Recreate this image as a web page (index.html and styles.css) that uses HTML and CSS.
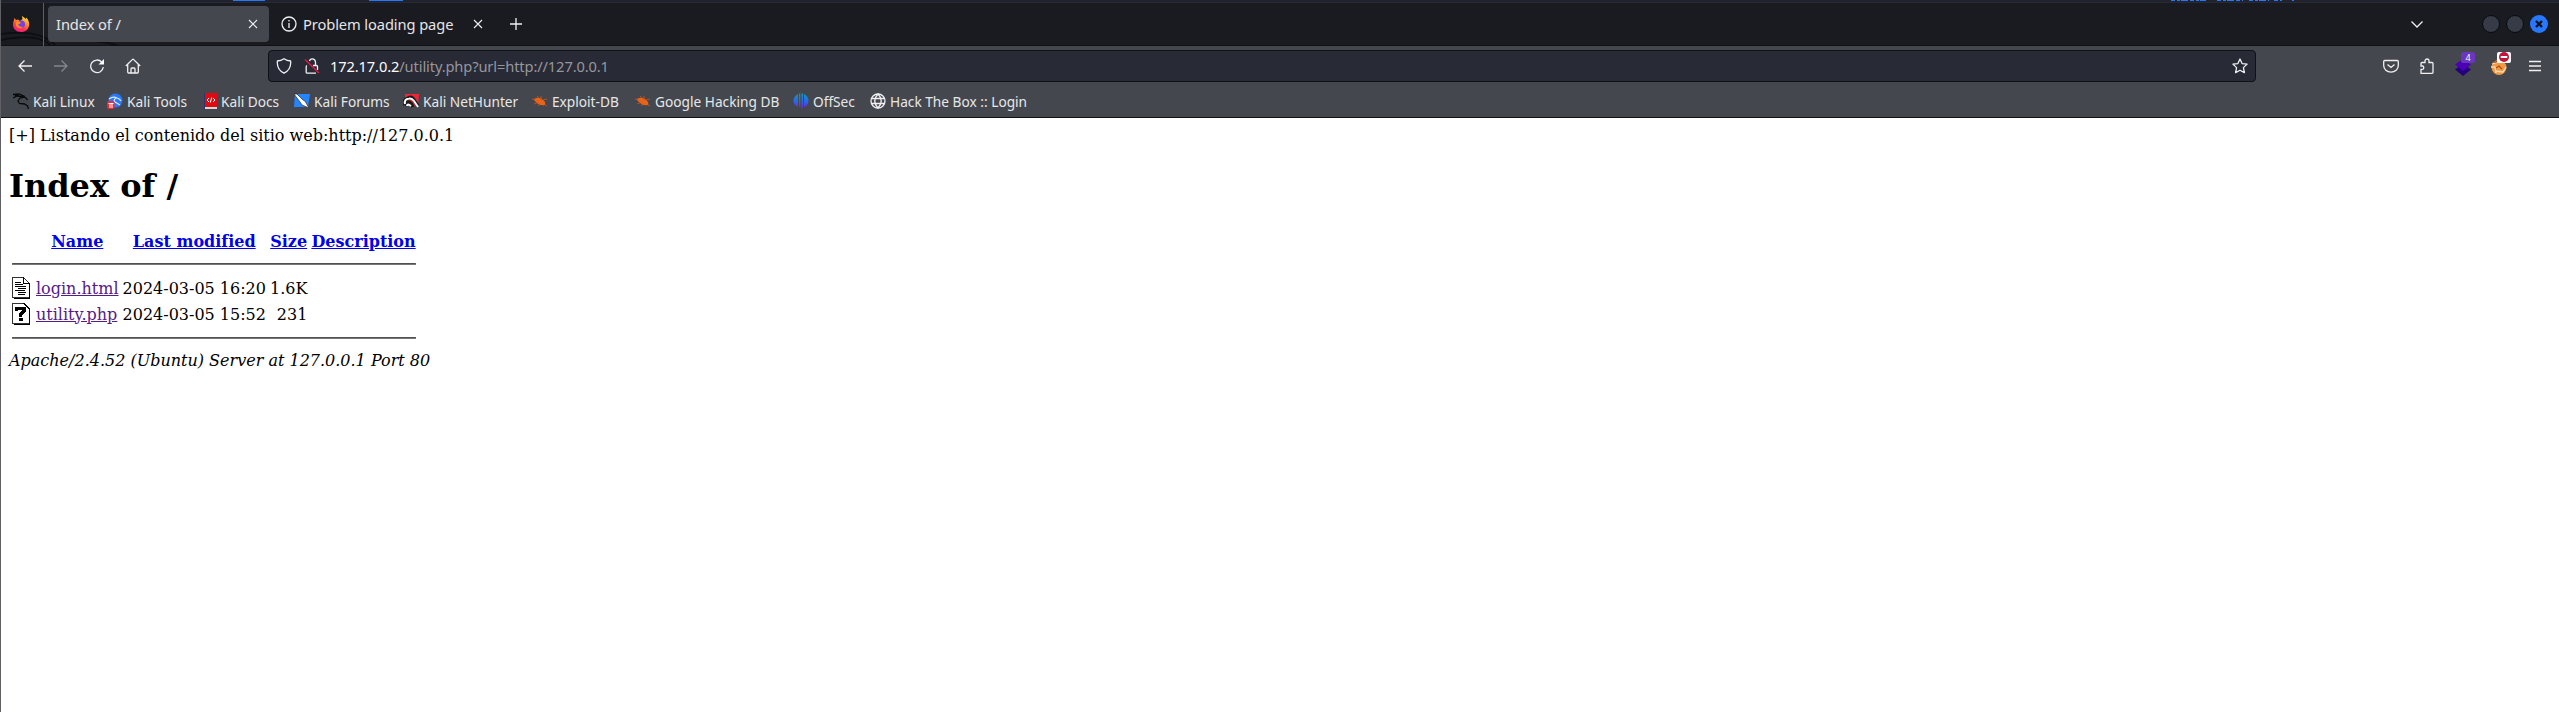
FILE: index.html
```html
<!DOCTYPE html>
<html lang="es">
<head>
<meta charset="utf-8">
<title>Index of /</title>
<link rel="stylesheet" href="styles.css">
</head>
<body>
<div class="window">
  <div class="desk"><svg width="2558" height="1" shape-rendering="crispEdges"><path d="M232 .5h32M368 .5h34" stroke="#2777ff"/><path d="M2170 .5h35M2216 .5h26M2248 .5h20M2273 .5h8M2291 .5h2" stroke="#2777ff" stroke-dasharray="4 2 3 1 7 2"/></svg></div>
  <div class="tabs">
    <svg class="dragon" width="200" height="43" viewBox="0 0 200 43"><path d="M0 31C22 28 43 29 55 43M0 37C25 32 42 34 50 43M94 38Q107 39 118 43" fill="none" stroke="#0e0f12" stroke-width="2"/></svg>
    <div class="fox">
      <svg width="18" height="18" viewBox="0 0 18 18"><defs><linearGradient id="fx" x1=".8" y1="0" x2=".3" y2="1"><stop offset="0" stop-color="#fff044"/><stop offset=".4" stop-color="#ff8a22"/><stop offset=".7" stop-color="#ff3b4c"/><stop offset="1" stop-color="#f21a88"/></linearGradient></defs><path d="M2.500 3 4 5 6 4.500 8 6 10.500 4 10 1l4 3 .5-1.500C17 6 18 9 16.500 12.500 15 16 12 17 9 17 4 17 1 13.500 1 9.500 1 7 2 5.500 2.500 3z" fill="url(#fx)"/><circle cx="9.300" cy="9.300" r="3.700" fill="#7542e5"/><path d="M4 7Q7 5 9 8L6 9.500Q7 12 11 12 7 15 4 11z" fill="#ff8c22"/></svg>
    </div>
    <div class="tab active"><span>Index of /</span><svg class="x" width="10" height="10" viewBox="0 0 10 10"><path d="M1 1l8 8M9 1l-8 8"/></svg></div>
    <div class="tab second"><svg width="16" height="16" viewBox="0 0 16 16"><circle cx="8" cy="8" r="7"/><path d="M8 7v5M8 4v1.500"/></svg><span>Problem loading page</span><svg class="x" width="10" height="10" viewBox="0 0 10 10"><path d="M1 1l8 8M9 1l-8 8"/></svg></div>
    <svg class="plus" width="12" height="12" viewBox="0 0 12 12"><path d="M6 0v12M0 6h12"/></svg>
    <svg class="chev" width="14" height="9" viewBox="0 0 14 9"><path d="M1.500 1.500 7 7l5.500-5.500"/></svg>
    <div class="controls"><i></i><i></i><b><svg width="10" height="10" viewBox="0 0 10 10"><path d="M2 2l6 6M8 2l-6 6"/></svg></b></div>
  </div>
  <div class="nav">
    <svg class="back" width="16" height="16" viewBox="0 0 16 16"><path d="M15 8H2M7.500 2.500 2 8l5.500 5.500"/></svg>
    <svg class="fwd" width="16" height="16" viewBox="0 0 16 16"><path d="M1 8h13M8.500 2.500 14 8l-5.500 5.500"/></svg>
    <svg class="reload" width="16" height="16" viewBox="0 0 16 16"><path d="M12.800 4.200A6.300 6.300 0 1 0 14.300 9"/><path d="M9.500 6.500h5.500V1z" fill="#fbfbfe" stroke="none"/></svg>
    <svg class="home" width="16" height="16" viewBox="0 0 16 16"><path d="M.8 8 7.300 1.600q.7-.7 1.400 0L15.200 8M2.700 6.500V14q0 1 1 1h8.600q1 0 1-1V6.500M6 15v-4q0-1 1-1h2q1 0 1 1v4"/></svg>
    <div class="url">
      <svg width="16" height="16" viewBox="0 0 16 16"><path d="M8 .8Q11 2.800 14.600 3 15.500 11.500 8 15.200.5 11.500 1.400 3 5 2.800 8 .8z"/></svg>
      <svg class="lock" width="16" height="16" viewBox="0 0 16 16"><path d="M5.500 3Q6 .8 8.200.8q3 0 3.300 3.200v3M3 7.500q-.8.300-.8 1.200v5.500q0 1 1 1H12M9 7.500h3.500q1 0 1 1V12"/><path d="M1 1.500 15 15" stroke="#e61745" stroke-width="1.400"/></svg>
      <span><em>172.17.0.2</em>/utility.php?url=http://127.0.0.1</span>
      <svg class="star" width="16" height="16" viewBox="0 0 16 16"><path d="m8 1 2.100 4.600 5 .5-3.700 3.500 1 5L8 12.200l-4.400 2.400 1-5L.9 6.100l5-.5z" stroke-linejoin="round"/></svg>
    </div>
    <div class="tools">
      <svg width="16" height="16" viewBox="0 0 16 16"><path d="M1.700 2.500h12.600q1 0 1 1V7.500a7.300 6.700 0 0 1-14.600 0V3.500q0-1 1-1zM4.500 6.500 8 9.500l3.500-3"/></svg>
      <svg width="16" height="16" viewBox="0 0 16 16"><path d="M2 8V5.500q0-1 1-1h3V3a2 2 0 0 1 4 0v1.500h3q1 0 1 1v9q0 .8-1 .8H2v-4h1.500a1.700 1.700 0 0 0 0-3.300z"/></svg>
      <div class="ext"><svg width="18" height="20" viewBox="0 0 18 20"><path d="m9 8 8 5.500L9 20l-8-6.500z" fill="#24007c" stroke="none"/><path d="m9 3 8 5.500L9 15 1 8.500z" fill="#4b00b5" stroke="none"/></svg><span class="badge">4</span></div>
      <div class="ext"><svg width="18" height="20" viewBox="0 0 18 20"><circle cx="9" cy="11.500" r="7.500" fill="#f19a43" stroke="none"/><path d="M1 11h4l1 6M5 15l8 1 3-5M2 8l7-2" stroke="#f2d9b8" fill="none"/><path d="M4 6q2 1 3-1M6 12l3-2 3 3" stroke="#b64d12"/></svg><span class="block"><svg width="10" height="10" viewBox="0 0 10 10"><circle cx="5" cy="5" r="5" fill="#c4143c" stroke="none"/><path d="M1.700 5h6.600" stroke="#fff" stroke-width="2"/></svg></span></div>
      <svg class="menu" width="16" height="16" viewBox="0 0 16 16"><path d="M2 3.500h12M2 8h12M2 12.500h12"/></svg>
    </div>
  </div>
  <div class="marks">
    <a class="linux"><svg width="16" height="16" viewBox="0 0 16 16"><path d="M0 1.500 6 1l6 2.500M0 5l4-2 5 .5 4 1.500 1.500 2M11 4l-4 1-2 3 1.500 2.500 5 .5 3 2 1 3M2 3l4-1" stroke="#090a0c" stroke-width="1.300"/></svg><span>Kali Linux</span></a>
    <a class="ktools"><svg width="16" height="16" viewBox="0 0 16 16"><circle cx="8.500" cy="7.500" r="7" fill="#2777ff" stroke="none"/><path d="M2 6q4-3 8-1 3 1 4 3M9 5Q6 7 8 9l5 3" stroke="#d7e8ff"/><rect y="8" width="7.500" height="8" rx="2" fill="#eb2b38" stroke="none"/><path d="M1.500 10.500h5M3 11v4M5 11v4" stroke="#fff" stroke-width="1"/></svg><span>Kali Tools</span></a>
    <a class="docs"><svg width="13" height="16" viewBox="0 0 13 16"><path d="M0 0h3v16H0z" fill="#26396c" stroke="none"/><path d="M1 0h12v14H1z" fill="#e20a12" stroke="none"/><path d="M1 14h12v2H1z" fill="#d8d8d8" stroke="none"/><path d="M5 5 3 7l2 2M9 5l2 2-2 2M7.700 4.500l-1.400 5" stroke="#fff" stroke-width="1"/></svg><span>Kali Docs</span></a>
    <a class="forums"><svg width="16" height="16" viewBox="0 0 16 16"><path d="M1 1h15l-2 13H0z" fill="#2584ff" stroke="none"/><path d="M0 1h3l6 6 2 1 4 7-7-3-2-3z" fill="#fff" stroke="#24292f" stroke-width=".7"/></svg><span>Kali Forums</span></a>
    <a class="hunter"><svg width="16" height="16" viewBox="0 0 16 16"><path d="M2 1h14l-1 12H2z" fill="#ef2638" stroke="none"/><path d="M2 12Q0 7 5 5q4-2 6 2l4 6M4 13q-1-4 2-4 2 0 4 5" stroke="#1a1a1a" stroke-width="3.500"/><path d="M2 11Q1 6 6 5.500 9 5 11 8l4 6M4 13q0-3 4 0" stroke="#fff" stroke-width="2"/></svg><span>Kali NetHunter</span></a>
    <a class="exploit"><svg width="16" height="16" viewBox="0 0 16 16"><path d="M2 6Q7 3 11 7q3 2 2 5-5 1-8-2-3-2-3-4z" fill="#ec6316" stroke="none"/><path d="M0 6l5 1M5 3l4 4M9 3v5M11 7l4-1M2 11l5-2M6 13l3-3M12 11l3 2" stroke="#d85c1c" stroke-width=".7"/></svg><span>Exploit-DB</span></a>
    <a class="google"><svg width="16" height="16" viewBox="0 0 16 16"><path d="M2 6Q7 3 11 7q3 2 2 5-5 1-8-2-3-2-3-4z" fill="#ec6316" stroke="none"/><path d="M0 6l5 1M5 3l4 4M9 3v5M11 7l4-1M2 11l5-2M6 13l3-3M12 11l3 2" stroke="#d85c1c" stroke-width=".7"/></svg><span>Google Hacking DB</span></a>
    <a class="offsec"><svg width="16" height="16" viewBox="0 0 16 16"><defs><linearGradient id="os" x2="0" y2="1"><stop stop-color="#1796b4"/><stop offset=".5" stop-color="#2868e8"/><stop offset="1" stop-color="#7620d0"/></linearGradient></defs><path d="M5 1v13Q0 12 .5 7 1 3 5 1zM6 .5h1.300v13.800L6 14zM8.500 .5H10V14l-1 2h-.5zM11 1q4 2 4.500 6 .5 5-4.500 7z" fill="url(#os)" stroke="none"/></svg><span>OffSec</span></a>
    <a class="htb"><svg width="16" height="16" viewBox="0 0 16 16"><circle cx="8" cy="8" r="7"/><path d="M1.500 5.500h13M1.500 10.500h13M8 1Q1.500 8 8 15 14.500 8 8 1z"/></svg><span>Hack The Box :: Login</span></a>
  </div>
  <main class="page">
    [+] Listando el contenido del sitio web:http://127.0.0.1
    <h1>Index of /</h1>
    <table>
      <tr><th class="pic"></th><th><a href="#">Name</a></th><th><a href="#">Last modified</a></th><th><a href="#">Size</a></th><th><a href="#">Description</a></th></tr>
      <tr><th colspan="5"><hr></th></tr>
      <tr><td class="pic"><svg width="20" height="22" viewBox="0 0 20 22" shape-rendering="crispEdges"><path d="M.5.500h11l6 6v14H.5z" fill="#fff" stroke="#333"/><path d="M11.500 0v6.500H18M17.500 6v15.500H2" fill="none" stroke="#000"/><path d="M3 5.500h6M3 7.500h8M3 9.500h11M6 11.500h8M3 13.500h10M6 15.500h8M6 17.500h7" stroke="#000"/></svg></td><td><a class="seen" href="#">login.html</a></td><td class="num">2024-03-05 16:20</td><td class="num">1.6K</td><td>&nbsp;</td></tr>
      <tr><td class="pic"><svg width="20" height="22" viewBox="0 0 20 22" shape-rendering="crispEdges"><path d="M.5.500h11l6 6v14H.5z" fill="#fff" stroke="#333"/><path d="M11.500 0 18 6.500M17.500 6v15.500H2" fill="none" stroke="#000"/><path d="M4.500 8V5.500h7.500V8L8.500 11v3M7 16.500h3.500" fill="none" stroke="#000" stroke-width="3.500"/></svg></td><td><a class="seen" href="#">utility.php</a></td><td class="num">2024-03-05 15:52</td><td class="num">231</td><td>&nbsp;</td></tr>
      <tr><th colspan="5"><hr></th></tr>
    </table>
    <address>Apache/2.4.52 (Ubuntu) Server at 127.0.0.1 Port 80</address>
  </main>
</div>
</body>
</html>
```
FILE: styles.css
```css
* { box-sizing: border-box; }
body { margin: 0; background: #fff; font-family: "Noto Sans", sans-serif; overflow: hidden; }
.window { width: 2559px; height: 712px; border-left: 1px solid #606064; }
svg { display: block; flex: none; fill: none; stroke: #f0f0f3; stroke-width: 1.3; }
.desk { height: 3px; background: #20232d; border-bottom: 1px solid #292b33; }
.tabs { position: relative; height: 43px; background: #1a1b20; border-bottom: 1px solid #101114; display: flex; align-items: center; color: #e5e5e7; font-size: 14.67px; letter-spacing: -.09px; }
.dragon { position: absolute; left: 0; top: 0; }
.fox { position: relative; width: 43px; height: 43px; border-right: 1px solid #606064; padding: 12px 0 0 11px; }
.fox svg { stroke: none; }
.tab { position: relative; height: 36px; display: flex; align-items: center; }
.tab.active { width: 221px; margin-left: 4px; padding: 0 11px 0 8px; background: #45474e; border-radius: 4px; justify-content: space-between; }
.tab .x { stroke-width: 1.1; }
.tab.second { width: 214px; padding-left: 12px; }
.second span { margin-left: 6px; white-space: nowrap; }
.second .x { margin-left: auto; }
.plus { margin-left: 27px; }
.chev { margin-left: auto; margin-right: 58px; }
.controls { display: flex; gap: 6px; margin-right: 11px; align-items: center; }
.controls i { width: 18px; height: 18px; border-radius: 50%; background: #363b47; border: 1px solid #090a0d; }
.controls b { width: 18px; height: 18px; border-radius: 50%; background: #2777ff; display: grid; place-items: center; }
.controls b svg { stroke: #10131c; stroke-width: 2.4; }
.nav { height: 40px; background: #45474e; display: flex; align-items: center; }
.back { margin-left: 16px; }
.fwd { margin-left: 20px; stroke: #85868b; }
.reload { margin-left: 20px; }
.home { margin-left: 20px; }
.url { width: 1988px; height: 32px; margin-left: 127px; background: #282a36; border: 1px solid #101116; border-radius: 4px; display: flex; align-items: center; padding: 0 7px; color: #96979d; font-size: 14.67px; letter-spacing: -.12px; }
.url .lock { margin-left: 12px; }
.url span { margin-left: 10px; }
.url em { color: #fbfbfe; font-style: normal; }
.star { margin-left: auto; }
.tools { margin-left: auto; margin-right: 16px; display: flex; align-items: center; gap: 20px; }
.ext { position: relative; width: 16px; height: 20px; }
.ext svg { margin-left: -1px; }
.ext .badge { position: absolute; left: 6px; top: -4px; width: 14px; height: 11px; border-radius: 2px; background: #6936bd; color: #fff; font-size: 9px; line-height: 11px; text-align: center; }
.ext .block { position: absolute; left: 6px; top: -4px; width: 14px; height: 11px; border-radius: 2px; background: #fff; }
.block svg { margin: 0 auto; }
.marks { height: 32px; background: #45474e; border-bottom: 1px solid #0f1014; display: grid; grid-template-columns: 94px 97px 90px 109px 129px 103px 158px 77px 160px; align-items: center; padding: 0 0 1px 12px; color: #e7e7e9; font-size: 13.7px; }
.marks a { display: flex; align-items: center; gap: 4px; white-space: nowrap; }
.page { display: block; padding: 8px; color: #000; font: 16px/19px "DejaVu Serif", serif; }
.page h1 { font-size: 32px; line-height: 38px; margin: 22px 0 24px; }
.page a { color: #0000ee; }
.page a.seen { color: #551a8b; }
.page table { border-spacing: 2px; border-collapse: separate; margin-bottom: 1px; }
.page th, .page td { padding: 1px; line-height: 19px; white-space: nowrap; }
.page svg { stroke-width: 1; }
.page .pic { width: 22px; }
.page .num { text-align: right; }
.page hr { margin: 8px 0; border: 1px solid #777; border-top-color: #505050; }
.page address { font-style: italic; }
```
